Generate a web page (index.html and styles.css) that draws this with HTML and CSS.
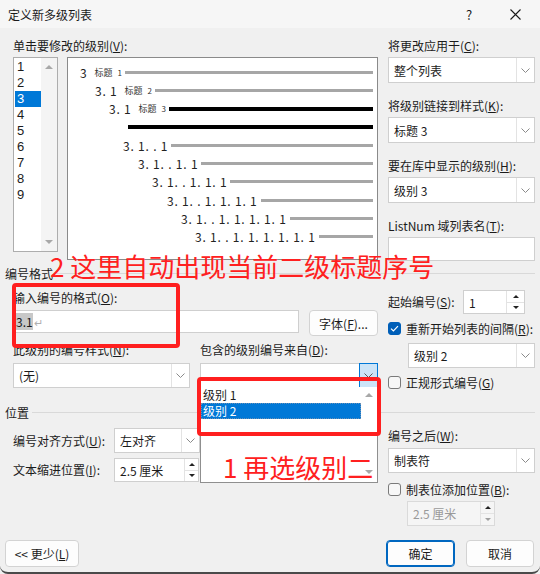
FILE: index.html
```html
<!DOCTYPE html>
<html lang="zh-CN">
<head>
<meta charset="utf-8">
<title>定义新多级列表</title>
<link rel="stylesheet" href="styles.css">
</head>
<body>
<div class="window">
  <div class="titlebar">
    <span class="title">定义新多级列表</span>
    <span class="help">?</span>
    <svg class="close" width="11" height="11" viewBox="0 0 11 11"><path d="M0.5 0.5 L10.5 10.5 M10.5 0.5 L0.5 10.5" stroke="#1a1a1a" stroke-width="1.1" fill="none"/></svg>
  </div>

  <div class="main">
    <div class="sec-top">
      <div class="top-left">
        <div class="label">单击要修改的级别(<u>V</u>):</div>
        <div class="lists">
          <div class="levels">
            <div class="level-items">
              <div class="lv">1</div>
              <div class="lv">2</div>
              <div class="lv sel">3</div>
              <div class="lv">4</div>
              <div class="lv">5</div>
              <div class="lv">6</div>
              <div class="lv">7</div>
              <div class="lv">8</div>
              <div class="lv">9</div>
            </div>
            <div class="vscroll"><span class="tri-up"></span><span class="tri-down"></span></div>
          </div>
          <div class="preview">
            <div class="prow p1"><span class="num">3</span><span class="sty">标题</span><span class="lvn">1</span><span class="bar"></span></div>
            <div class="prow p2"><span class="num">3. 1</span><span class="sty">标题</span><span class="lvn">2</span><span class="bar"></span></div>
            <div class="prow p3"><span class="num">3. 1</span><span class="sty">标题</span><span class="lvn">3</span><span class="bar black"></span></div>
            <div class="prow p4"><span class="bar black solo"></span></div>
            <div class="prow p5"><span class="num">3. 1. . 1</span><span class="bar"></span></div>
            <div class="prow p6"><span class="num">3. 1. . 1. 1</span><span class="bar"></span></div>
            <div class="prow p7"><span class="num">3. 1. . 1. 1. 1</span><span class="bar"></span></div>
            <div class="prow p8"><span class="num">3. 1. . 1. 1. 1. 1</span><span class="bar"></span></div>
            <div class="prow p9"><span class="num">3. 1. . 1. 1. 1. 1. 1</span><span class="bar"></span></div>
            <div class="prow p10"><span class="num">3. 1. . 1. 1. 1. 1. 1. 1</span><span class="bar"></span></div>
          </div>
        </div>
      </div>

      <div class="top-right">
        <div class="field first">
          <div class="label">将更改应用于(<u>C</u>):</div>
          <div class="combo h26"><span class="val">整个列表</span><span class="drop"><svg width="9" height="5" viewBox="0 0 9 5"><path d="M0.5 0.5 L4.5 4.5 L8.5 0.5" fill="none" stroke="#8a8a8a"/></svg></span></div>
        </div>
        <div class="field">
          <div class="label">将级别链接到样式(<u>K</u>):</div>
          <div class="combo h26"><span class="val">标题 3</span><span class="drop"><svg width="9" height="5" viewBox="0 0 9 5"><path d="M0.5 0.5 L4.5 4.5 L8.5 0.5" fill="none" stroke="#8a8a8a"/></svg></span></div>
        </div>
        <div class="field">
          <div class="label">要在库中显示的级别(<u>H</u>):</div>
          <div class="combo h26"><span class="val">级别 3</span><span class="drop"><svg width="9" height="5" viewBox="0 0 9 5"><path d="M0.5 0.5 L4.5 4.5 L8.5 0.5" fill="none" stroke="#8a8a8a"/></svg></span></div>
        </div>
        <div class="field">
          <div class="label">ListNum 域列表名(<u>T</u>):</div>
          <div class="textbox listnum"></div>
        </div>
      </div>
    </div>

    <div class="group-h first-group"><span>编号格式</span></div>

    <div class="sec-b">
      <div class="b-left">
        <div class="label fmt-label">输入编号的格式(<u>O</u>):</div>
        <div class="fmt-row">
          <div class="textbox fmt"><span class="hl">3.1</span><span class="ret">↵</span></div>
          <div class="btn font-btn">字体(<u>F</u>)...</div>
        </div>
        <div class="label-row">
          <div class="label style-label">此级别的编号样式(<u>N</u>):</div>
          <div class="label">包含的级别编号来自(<u>D</u>):</div>
        </div>
        <div class="combo-row">
          <div class="combo style-combo"><span class="val">(无)</span><span class="drop"><svg width="9" height="5" viewBox="0 0 9 5"><path d="M0.5 0.5 L4.5 4.5 L8.5 0.5" fill="none" stroke="#8a8a8a"/></svg></span></div>
          <div class="combo from-combo"><span class="val"></span><span class="drop open"><svg width="9" height="5" viewBox="0 0 9 5"><path d="M0.5 0.5 L4.5 4.5 L8.5 0.5" fill="none" stroke="#5a5a5a"/></svg></span></div>
        </div>
      </div>

      <div class="b-right">
        <div class="start-row">
          <span class="label">起始编号(<u>S</u>):</span>
          <div class="spin start-spin"><span class="val">1</span><span class="spinbtns wide"><span class="sb"><span class="mini-up"></span></span><span class="sb"><span class="mini-down"></span></span></span></div>
        </div>
        <div class="check-row restart"><span class="cb checked"><svg width="9" height="7" viewBox="0 0 9 7"><path d="M1 3.6 L3.4 6 L8 1.2" fill="none" stroke="#fff" stroke-width="1.2"/></svg></span><span>重新开始列表的间隔(<u>R</u>):</span></div>
        <div class="combo restart-combo"><span class="val">级别 2</span><span class="drop"><svg width="9" height="5" viewBox="0 0 9 5"><path d="M0.5 0.5 L4.5 4.5 L8.5 0.5" fill="none" stroke="#8a8a8a"/></svg></span></div>
        <div class="check-row legal"><span class="cb"></span><span>正规形式编号(<u>G</u>)</span></div>
      </div>
    </div>

    <div class="group-h pos-group"><span>位置</span></div>

    <div class="sec-c">
      <div class="c-left">
        <div class="pos-row first">
          <span class="label pos-label">编号对齐方式(<u>U</u>):</span>
          <div class="combo align-combo"><span class="val">左对齐</span><span class="drop"><svg width="9" height="5" viewBox="0 0 9 5"><path d="M0.5 0.5 L4.5 4.5 L8.5 0.5" fill="none" stroke="#8a8a8a"/></svg></span></div>
        </div>
        <div class="pos-row second">
          <span class="label pos-label">文本缩进位置(<u>I</u>):</span>
          <div class="spin indent-spin"><span class="val">2.5 厘米</span><span class="spinbtns"><span class="sb"><span class="mini-up"></span></span><span class="sb"><span class="mini-down"></span></span></span></div>
        </div>
      </div>
      <div class="c-right">
        <div class="label after-label">编号之后(<u>W</u>):</div>
        <div class="combo after-combo"><span class="val">制表符</span><span class="drop"><svg width="9" height="5" viewBox="0 0 9 5"><path d="M0.5 0.5 L4.5 4.5 L8.5 0.5" fill="none" stroke="#8a8a8a"/></svg></span></div>
        <div class="check-row tabstop"><span class="cb"></span><span>制表位添加位置(<u>B</u>):</span></div>
        <div class="spin tab-spin disabled"><span class="val">2.5 厘米</span><span class="spinbtns"><span class="sb"><span class="mini-up"></span></span><span class="sb"><span class="mini-down dim"></span></span></span></div>
      </div>
    </div>

    <div class="buttons">
      <div class="btn less-btn">&lt;&lt; 更少(<u>L</u>)</div>
      <div class="spacer"></div>
      <div class="btn ok-btn">确定</div>
      <div class="btn cancel-btn">取消</div>
    </div>
  </div>

  <!-- open dropdown list -->
  <div class="dropdown-list">
    <div class="dd-items">
      <div class="dd-item">级别 1</div>
      <div class="dd-item sel">级别 2</div>
    </div>
    <div class="dd-scroll"><span class="tri-up"></span><span class="tri-down"></span></div>
  </div>

  <!-- annotations -->
  <div class="red-box r1"></div>
  <div class="red-box r2"></div>
  <div class="red-text t1">2 这里自动出现当前二级标题序号</div>
  <div class="red-text t2">1 再选级别二</div>
</div>
</body>
</html>
```

FILE: styles.css
```css
html, body {
  margin: 0;
  padding: 0;
  background: #f0f0f0;
}
body {
  font-family: "Noto Sans CJK SC", "Noto Sans", sans-serif;
  font-size: 12px;
  color: #1b1b1b;
}
u { text-decoration: underline; text-underline-offset: 1px; }

.window {
  position: relative;
  width: 540px;
  height: 574px;
  background: #f0f0f0;
  overflow: hidden;
  box-sizing: border-box;
  border-bottom: 2px solid #4a4a4a;
  border-radius: 0 0 8px 8px;
}

/* title bar */
.titlebar {
  height: 28px;
  background: #f6f6f6;
  display: flex;
  align-items: center;
  padding-left: 8px;
}
.title { flex: 1; font-size: 12px; color: #1a1a1a; }
.help { width: 10px; text-align: center; font-size: 13px; margin-right: 36px; }
.close { margin-right: 19px; }

.main { padding: 0 5px 0 13px; }

.label {
  height: 16px;
  line-height: 16px;
  white-space: nowrap;
}

/* top section */
.sec-top { display: flex; gap: 10px; margin-top: 10px; }
.top-left { width: 365px; }
.top-left > .label { margin-bottom: 3px; }
.lists { display: flex; gap: 9px; align-items: flex-start; }

.levels {
  width: 45px;
  height: 195px;
  box-sizing: border-box;
  border: 1px solid #adadad;
  background: #fff;
  display: flex;
}
.level-items { flex: 1; padding: 1px 0 0 1px; }
.lv {
  height: 16px;
  line-height: 16px;
  padding-left: 2px;
  font-family: "Liberation Sans", "Noto Sans", sans-serif;
  font-size: 13px;
}
.lv.sel { background: #0078d7; color: #fff; }
.vscroll {
  width: 16px;
  background: #f4f4f4;
  display: flex;
  flex-direction: column;
  align-items: center;
  justify-content: space-between;
  padding: 7px 0 7px;
}
.tri-up {
  width: 0; height: 0;
  border-left: 4px solid transparent;
  border-right: 4px solid transparent;
  border-bottom: 4px solid #a8a8a8;
}
.tri-down {
  width: 0; height: 0;
  border-left: 4px solid transparent;
  border-right: 4px solid transparent;
  border-top: 4px solid #a8a8a8;
}

.preview {
  width: 311px;
  height: 203px;
  box-sizing: border-box;
  border: 1px solid #8a8a8a;
  background: #fff;
  padding: 5px 4px 0 0;
}
.prow { display: flex; align-items: center; height: 18.3px; }
.num { font-size: 12px; letter-spacing: 0.8px; white-space: nowrap; color: #222; }
.sty { font-size: 9px; margin-left: 7px; color: #333; }
.lvn { font-size: 8px; margin-left: 5px; color: #333; }
.bar { flex: 1; height: 3px; background: #a6a6a6; margin-left: 3px; }
.bar.black { background: #000; height: 4px; }
.bar.solo { margin-left: 0; }
.p1 { padding-left: 12px; }
.p2 { padding-left: 27px; }
.p3 { padding-left: 41px; }
.p4 { padding-left: 60px; }
.p5 { padding-left: 55px; }
.p6 { padding-left: 70px; }
.p7 { padding-left: 84px; }
.p8 { padding-left: 99px; }
.p9 { padding-left: 113px; }
.p10 { padding-left: 127px; }

.top-right { width: 147px; display: flex; flex-direction: column; }
.field .label { margin-bottom: 3px; }
.field + .field { margin-top: 15px; }

/* inputs */
.combo {
  display: flex;
  height: 25px;
  background: #fff;
  border: 1px solid #cfcfcf;
  box-sizing: border-box;
}
.combo.h26 { height: 26px; }
.combo .val, .spin .val {
  flex: 1;
  padding-left: 5px;
  display: flex;
  align-items: center;
  white-space: nowrap;
  overflow: hidden;
}
.drop {
  width: 17px;
  border-left: 1px solid #e3e3e3;
  display: flex;
  align-items: center;
  justify-content: center;
}
.drop.open {
  background: #cce4f7;
  border: 1px solid #0078d7;
  margin: -1px -1px -1px 0;
}
.textbox {
  background: #fff;
  border: 1px solid #cfcfcf;
  box-sizing: border-box;
}
.textbox.listnum { height: 24px; }

.spin {
  display: flex;
  background: #fff;
  border: 1px solid #cfcfcf;
  box-sizing: border-box;
}
.spinbtns {
  width: 13px;
  display: flex;
  flex-direction: column;
  border-left: 1px solid #e3e3e3;
}
.spinbtns.wide { width: 17px; }
.sb {
  flex: 1;
  display: flex;
  align-items: center;
  justify-content: center;
}
.sb + .sb { border-top: 1px solid #e3e3e3; }
.mini-up {
  width: 0; height: 0;
  border-left: 3px solid transparent;
  border-right: 3px solid transparent;
  border-bottom: 3px solid #222;
}
.mini-down {
  width: 0; height: 0;
  border-left: 3px solid transparent;
  border-right: 3px solid transparent;
  border-top: 3px solid #222;
}
.mini-down.dim { border-top-color: #a0a0a0; }

.btn {
  box-sizing: border-box;
  height: 27px;
  background: #fdfdfd;
  border: 1px solid #d3d3d3;
  border-radius: 4px;
  display: flex;
  align-items: center;
  justify-content: center;
  white-space: nowrap;
}

.cb {
  width: 13px;
  height: 13px;
  box-sizing: border-box;
  border: 1px solid #7a7a7a;
  border-radius: 3px;
  background: #f7f7f7;
  display: flex;
  align-items: center;
  justify-content: center;
  flex: none;
}
.cb.checked { background: #005fb8; border-color: #005fb8; }
.check-row {
  height: 16px;
  display: flex;
  align-items: center;
  gap: 5px;
  white-space: nowrap;
}

/* group headers */
.group-h {
  height: 16px;
  margin-left: -8px;
  display: flex;
  align-items: center;
  gap: 3px;
  white-space: nowrap;
}
.group-h::after {
  content: "";
  flex: 1;
  border-top: 1px solid #d9d9d9;
}
.first-group { margin-top: 4px; }
.pos-group { margin-top: 14px; }

/* numbering format section */
.sec-b { display: flex; gap: 10px; }
.b-left { width: 365px; }
.fmt-label { margin-top: 9px; margin-bottom: 4px; }
.fmt-row { display: flex; gap: 10px; align-items: flex-start; height: 26px; }
.textbox.fmt {
  width: 286px;
  height: 23px;
  display: flex;
  align-items: center;
  padding-left: 2px;
}
.hl { background: #c8c8c8; line-height: 17px; }
.ret { color: #b0b0b0; font-size: 11px; margin-left: 1px; }
.font-btn { width: 69px; height: 26px; }
.label-row { display: flex; margin-top: 6px; margin-bottom: 5px; }
.style-label { width: 187px; }
.combo-row { display: flex; gap: 10px; }
.style-combo { width: 177px; }
.from-combo { width: 178px; }

.b-right { width: 147px; }
.start-row { display: flex; align-items: center; height: 24px; margin-top: 9px; }
.start-row .label { width: 75px; }
.start-spin { width: 62px; height: 24px; }
.restart { margin-top: 6px; }
.restart-combo { margin-top: 7px; margin-left: 20px; width: 127px; }
.legal { margin-top: 6px; }

/* position section */
.sec-c { display: flex; gap: 10px; }
.c-left { width: 365px; }
.pos-row { display: flex; align-items: center; }
.pos-row.first { margin-top: 8px; }
.pos-row.second { margin-top: 5px; }
.pos-label { width: 101px; }
.align-combo { width: 86px; }
.indent-spin { width: 85px; height: 24px; }

.c-right { width: 147px; }
.after-label { margin-top: 8px; margin-bottom: 4px; }
.after-combo { width: 147px; }
.tabstop { margin-top: 8px; }
.tab-spin { margin-top: 4px; margin-left: 19px; width: 88px; height: 25px; }
.spin.disabled { background: #f5f5f5; border-color: #dadada; color: #9a9a9a; }
.spin.disabled .mini-up { border-bottom-color: #222; }

/* buttons */
.buttons { display: flex; margin-top: 14px; margin-right: 1px; }
.less-btn { width: 74px; margin-left: -8px; }
.spacer { flex: 1; }
.ok-btn { width: 69px; border: 1px solid #0067c0; box-shadow: inset 0 0 0 1px #0067c0; }
.cancel-btn { width: 68px; margin-left: 11px; }

/* open dropdown overlay */
.dropdown-list {
  position: absolute;
  left: 200px;
  top: 387px;
  width: 178px;
  height: 96px;
  box-sizing: border-box;
  background: #fff;
  border: 1px solid #8f8f8f;
  border-top: none;
  display: flex;
}
.dd-items { flex: 1; }
.dd-item { height: 16px; line-height: 16px; padding-left: 2px; }
.dd-item.sel {
  background: #0078d7;
  color: #fff;
  outline: 1px dotted #6a8fb5;
  outline-offset: -1px;
}
.dd-scroll {
  width: 16px;
  background: #fff;
  display: flex;
  flex-direction: column;
  align-items: center;
  justify-content: space-between;
  padding: 6px 0 8px;
}

/* red annotations */
.red-box {
  position: absolute;
  box-sizing: border-box;
  border: 4px solid #ff1f1f;
  border-radius: 4px;
}
.red-box.r1 { left: 12px; top: 283px; width: 168px; height: 65px; }
.red-box.r2 { left: 197px; top: 377px; width: 184px; height: 59px; }
.red-text {
  position: absolute;
  font-size: 26px;
  line-height: 30px;
  color: #ff2020;
  white-space: nowrap;
}
.red-text.t1 { left: 50px; top: 251px; }
.red-text.t2 { left: 223px; top: 452px; }
```
